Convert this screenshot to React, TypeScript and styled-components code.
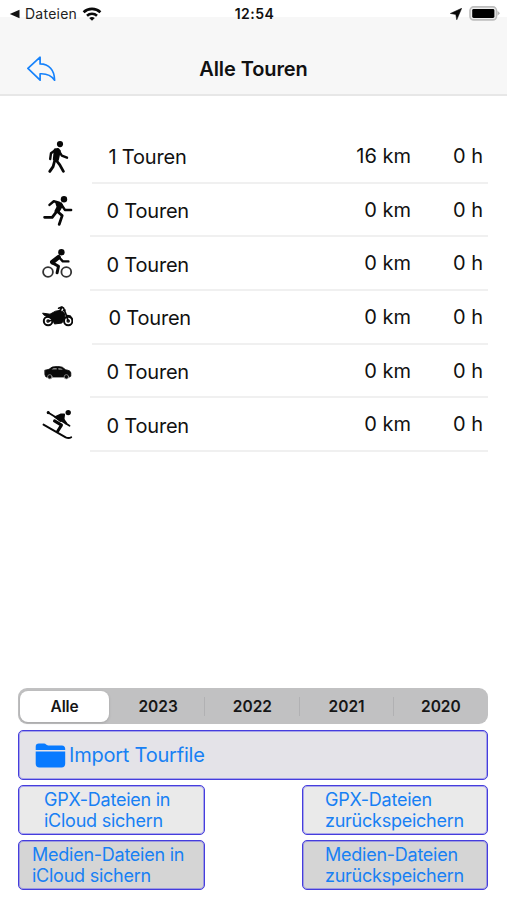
import React from "react";
import styled, { createGlobalStyle } from "styled-components";

const GlobalStyle = createGlobalStyle`
  * { box-sizing: border-box; }
  body { margin: 0; background: #fff; font-family: Inter, "Liberation Sans", sans-serif; color: #111; }
  button { font: inherit; margin: 0; cursor: pointer; }
  svg { display: block; flex: none; }
`;

const Screen = styled.div`
  width: 507px;
  height: 900px;
  overflow: hidden;
  background: #fff;
  display: flex;
  flex-direction: column;
`;

const Top = styled.header`
  height: 96px;
  flex: none;
  background: linear-gradient(#fff 0 17px, #f7f7f7 17px);
  border-bottom: 2px solid #e7e7e7;
`;

const StatusBar = styled.div`
  height: 27px;
  display: grid;
  grid-template-columns: 1fr auto 1fr;
  align-items: center;
  padding: 0 7px 0 9px;
  font-size: 14px;
`;

const StatusGroup = styled.div<{ $end?: boolean }>`
  display: flex;
  align-items: center;
  justify-content: ${(p) => (p.$end ? "flex-end" : "flex-start")};
  gap: ${(p) => (p.$end ? 7 : 5)}px;
`;

const BackApp = styled.span`
  letter-spacing: 0.25px;
  color: #222;
`;

const Clock = styled.span`
  font-weight: 600;
  font-size: 14px;
  letter-spacing: 0.5px;
`;

const NavBar = styled.div`
  height: 67px;
  display: grid;
  grid-template-columns: 80px 1fr 80px;
  align-items: center;
  padding-top: 16px;
`;

const BackButton = styled.button`
  border: 0;
  background: none;
  padding: 0 0 0 26px;
`;

const Title = styled.h1`
  margin: 0;
  text-align: center;
  font-size: 20px;
  font-weight: 600;
  line-height: 26px;
  letter-spacing: -0.1px;
`;

const TourList = styled.ul`
  list-style: none;
  margin: 34px 0 0;
  padding: 0 19px 0 41px;
`;

const TourRow = styled.li`
  display: flex;
  height: 53.7px;
  align-items: center;
`;

const TourInfo = styled.div<{ $inset: number }>`
  flex: 1;
  height: 100%;
  margin-left: ${(p) => 17 + p.$inset}px;
  border-bottom: 2px solid #f0f0f0;
  display: flex;
  align-items: center;
  font-size: 20px;
  line-height: 24px;
`;

const Count = styled.span`
  flex: 1;
  padding: 3px 0 0 16.5px;
  letter-spacing: -0.2px;
`;

const Distance = styled.span`
  width: 100px;
  text-align: right;
`;

const Duration = styled.span`
  width: 77px;
  padding-right: 5px;
  text-align: right;
`;

const Footer = styled.footer`
  margin-top: auto;
  padding: 0 19px 10px 18px;
  display: flex;
  flex-direction: column;
  gap: 6px;
`;

const Segments = styled.div`
  height: 36px;
  padding: 2.5px 0 2.5px 2px;
  border-radius: 9px;
  background: #c1c1c2;
  display: grid;
  grid-template-columns: 91px repeat(4, 1fr);
`;

const Segment = styled.button<{ $active?: boolean; $divider?: boolean }>`
  border: 0;
  padding: 0;
  margin-right: ${(p) => (p.$active ? 2 : 0)}px;
  border-radius: ${(p) => (p.$active ? 8 : 0)}px;
  background: ${(p) =>
    p.$active
      ? "#fff"
      : p.$divider
        ? "linear-gradient(#b1b1b3, #b1b1b3) right center / 1px 19px no-repeat"
        : "transparent"};
  box-shadow: ${(p) => (p.$active ? "0 1px 3px rgba(0,0,0,.16)" : "none")};
  color: #161616;
  font-size: 15.5px;
  font-weight: 600;
  letter-spacing: ${(p) => (p.$active ? -0.2 : 0)}px;
`;

const ActionButton = styled.button<{ $fill: string; $indent: number }>`
  height: 50px;
  border: 1px solid #453ddd;
  box-shadow: inset 0 0 0 1px rgba(90, 84, 235, 0.45);
  border-radius: 5px;
  background: ${(p) => p.$fill};
  color: #1780f4;
  padding: 0 0 0 ${(p) => p.$indent}px;
  display: flex;
  align-items: center;
  gap: 3px;
  text-align: left;
  white-space: pre-line;
  font-size: 18px;
  line-height: 21.5px;
  letter-spacing: -0.25px;
`;

const ImportLabel = styled.span`
  font-size: 20px;
  letter-spacing: -0.22px;
  padding-top: 2px;
`;

const ActionPair = styled.div`
  display: grid;
  grid-template-columns: 187px 186px;
  justify-content: space-between;
  margin-top: -1px;
`;

const Glyph = ({ children }: { children: React.ReactNode }) => (
  <svg width="32" height="32" viewBox="0 0 32 32" fill="none" stroke="#080808" strokeLinecap="round" strokeLinejoin="round">
    {children}
  </svg>
);

const Walk = () => (
  <Glyph>
    <circle cx="19" cy="3.1" r="3.1" fill="#080808" stroke="none" />
    <path d="M13.8 8.6 17 8l1.8 2-2 9-4-.5Z" fill="#080808" strokeWidth="2" />
    <path d="M14.5 9 10 12.2 9.2 18M18 10.2l2.8 4.4 5.2 2.1" strokeWidth="2.4" />
    <path d="m14.6 18.5 4.2 5.4 3.6 6.5M13.6 20l-1.5 5.6-3.3 4.8" strokeWidth="2.8" />
  </Glyph>
);

const Run = () => (
  <Glyph>
    <circle cx="23" cy="4.2" r="3.2" fill="#080808" stroke="none" />
    <path d="m15.3 8 4.7.2 1.1 2.3-3.4 6-3.3-.4 2.2-4.2Z" fill="#080808" strokeWidth="2" />
    <path d="m18 7.6-5.2-1.3-4.3 3.6M20.6 10l3.3 4.9h6.2" strokeWidth="2.5" />
    <path d="m16.2 16.3 5 4.3-3 8.8M15 17.3l-3.8 5H3.6" strokeWidth="2.8" />
  </Glyph>
);

const Bike = () => (
  <Glyph>
    <circle cx="20.4" cy="4.2" r="3.2" fill="#080808" stroke="none" />
    <circle cx="7" cy="24" r="4.9" stroke="#333" strokeWidth="1.8" />
    <circle cx="25.3" cy="24" r="4.9" stroke="#333" strokeWidth="1.8" />
    <path d="m17.5 9.2-6.2 4.9" strokeWidth="4.6" />
    <path d="m18 9.2 3.8 4.2h5.6" strokeWidth="2.4" />
    <path d="m11.5 14.9 6 3.3-1.4 6.6" strokeWidth="3" />
  </Glyph>
);

const Motorcycle = () => (
  <Glyph>
    <circle cx="7.1" cy="19" r="4.3" strokeWidth="2" />
    <circle cx="27.2" cy="19" r="4.2" strokeWidth="2" />
    <circle cx="7.1" cy="19" r="1.2" strokeWidth="1.2" />
    <circle cx="27.2" cy="19" r="1.2" strokeWidth="1.2" />
    <path d="m2 11.2 7 1 5.5-3 4.5-.8 4 2 1 4.2-3.1 6.4-7.4 1-2-4.6L3 13Z" fill="#080808" strokeWidth="1" />
    <path d="m17.6 6.2 3-1.2 1.9 1 2 5 2.7 8M21 5l-2.2 4M22.5 8.5l1.5-.3M26 13.5l3.2.6 1.6 2.4M7.2 19l7-1.4" strokeWidth="1.7" />
  </Glyph>
);

const Car = () => (
  <Glyph>
    <path d="M4.1 14.2 8 13.3l3.1-2.2c3.5-.9 8.2-.6 10.2.1l3.4 2.6c3.3.5 5 1.3 5.1 3.2v3.2l-1.4.8H5l-1-2.1Z" fill="#080808" strokeWidth=".8" />
    <path d="m10.4 13.4 2.2-1.3h3l.2 1.5ZM17.3 12.1l3 .3 1.6 1.4-4.4-.1Z" fill="#888" stroke="none" />
    <circle cx="8.8" cy="20.8" r="2.2" fill="#080808" stroke="#aaa" strokeWidth=".7" />
    <circle cx="25.4" cy="20.8" r="2.2" fill="#080808" stroke="#aaa" strokeWidth=".7" />
  </Glyph>
);

const Ski = () => (
  <Glyph>
    <circle cx="27.2" cy="3.6" r="2.7" fill="#080808" stroke="none" />
    <circle cx="7.2" cy="3.6" r="1" fill="#080808" strokeWidth="1.1" />
    <path d="m7.5 3.8 21 12.9" strokeWidth="1.8" />
    <path d="m14.2 8 5.4-2.5h3.5l-.7 5-3 1.5Z" fill="#080808" strokeWidth="1.9" />
    <path d="m22 10 3.2 4.4" strokeWidth="2.2" />
    <path d="m13.5 11.9 7 4.2-4 6.4" strokeWidth="3" />
    <path d="m2.5 15.6 22.2 12.8q3 1.4 5.5-.1" strokeWidth="1.9" />
  </Glyph>
);

const tours = [
  { Icon: Walk, count: "1 Touren", km: "16 km", inset: 2 },
  { Icon: Run, count: "0 Touren", km: "0 km", inset: 0 },
  { Icon: Bike, count: "0 Touren", km: "0 km", inset: 0 },
  { Icon: Motorcycle, count: "0 Touren", km: "0 km", inset: 2 },
  { Icon: Car, count: "0 Touren", km: "0 km", inset: 0 },
  { Icon: Ski, count: "0 Touren", km: "0 km", inset: 0 },
];

const years = ["Alle", "2023", "2022", "2021", "2020"];

export default function App() {
  return (
    <Screen>
      <GlobalStyle />
      <Top>
        <StatusBar>
          <StatusGroup>
            <svg width="11" height="10" viewBox="0 0 11 10"><path d="M.8 5 10.5.8v8.4Z" fill="#111" /></svg>
            <BackApp>Dateien</BackApp>
            <svg width="20" height="14" viewBox="0 0 20 14" fill="none" stroke="#0a0a0a" strokeWidth="2.6">
              <path d="M1.6 5.2C6.2.7 13.8.7 18.4 5.2M5 8.7c2.8-2.6 7.2-2.6 10 0" />
              <path d="M7.2 11q2.8-2 5.6 0L10 13.8Z" fill="#0a0a0a" stroke="none" />
            </svg>
          </StatusGroup>
          <Clock>12:54</Clock>
          <StatusGroup $end>
            <svg width="12" height="12" viewBox="0 0 11 11"><path d="M10.7.3 6.2 10.8 5.3 5.9.3 5Z" fill="#080808" stroke="#080808" strokeWidth=".5" /></svg>
            <svg width="31" height="15" viewBox="0 0 31 15">
              <rect x="1" y=".9" width="26.5" height="13" rx="3.6" fill="#eee" stroke="#bdbdbd" strokeWidth="1.6" />
              <path d="M28.5 4.8 31 7.3l-2.5 2.4Z" fill="#b5b5b5" />
              <rect x="3.2" y="3" width="22.2" height="8.9" rx="1.4" fill="#000" />
            </svg>
          </StatusGroup>
        </StatusBar>
        <NavBar>
          <BackButton aria-label="Zurück">
            <svg width="31" height="26" viewBox="0 0 31 26" fill="none" stroke="#1682fb" strokeWidth="1.7" strokeLinejoin="round">
              <path d="M1.9 12.4 14.1 1.2v6.7c8.8.2 14.4 6 14.5 16.3-3.3-4.9-7.3-6.8-14.5-6.4v6.4Z" />
            </svg>
          </BackButton>
          <Title>Alle Touren</Title>
        </NavBar>
      </Top>

      <TourList>
        {tours.map(({ Icon, count, km, inset }, i) => (
          <TourRow key={i}>
            <Icon />
            <TourInfo $inset={inset}>
              <Count>{count}</Count>
              <Distance>{km}</Distance>
              <Duration>0 h</Duration>
            </TourInfo>
          </TourRow>
        ))}
      </TourList>

      <Footer>
        <Segments>
          {years.map((year, i) => (
            <Segment key={year} $active={i === 0} $divider={i > 0 && i < 4}>{year}</Segment>
          ))}
        </Segments>
        <ActionButton $fill="#e4e3e8" $indent={16}>
          <svg width="31" height="25" viewBox="0 0 31 25" fill="#087aff">
            <path d="M.7 7.1V3.7C.7 1.6 1.8.6 3.9.6h5.2c1.8 0 2.2 1.9 4 1.9h13.8c2.1 0 3.3 1.3 3.3 3.3v1.3Z" />
            <path d="M.7 8.6h29.5v12.1c0 2.4-1.3 3.7-3.7 3.7h-22c-2.5 0-3.8-1.3-3.8-3.7Z" />
          </svg>
          <ImportLabel>Import Tourfile</ImportLabel>
        </ActionButton>
        <ActionPair>
          <ActionButton $fill="#eaeaea" $indent={25}>{"GPX-Dateien in\niCloud sichern"}</ActionButton>
          <ActionButton $fill="#eaeaea" $indent={22}>{"GPX-Dateien\nzurückspeichern"}</ActionButton>
        </ActionPair>
        <ActionPair>
          <ActionButton $fill="#d5d5d5" $indent={13}>{"Medien-Dateien in\niCloud sichern"}</ActionButton>
          <ActionButton $fill="#d5d5d5" $indent={22}>{"Medien-Dateien\nzurückspeichern"}</ActionButton>
        </ActionPair>
      </Footer>
    </Screen>
  );
}
